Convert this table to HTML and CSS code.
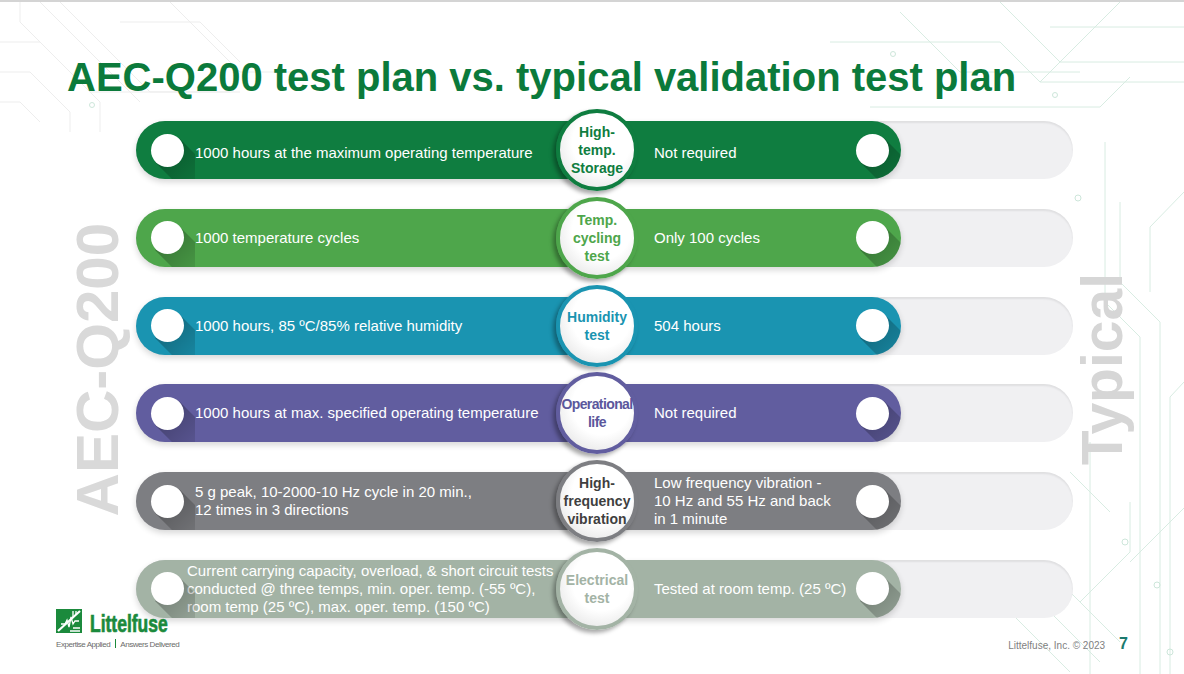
FILE: index.html
```html
<!DOCTYPE html>
<html lang="en">
<head>
<meta charset="utf-8">
<title>AEC-Q200 test plan vs. typical validation test plan</title>
<link rel="stylesheet" href="styles.css">
</head>
<body>
<div class="slide">
  <h1 class="title">AEC-Q200 test plan vs. typical validation test plan</h1>
  <div class="main">
    <div class="side-label side-left">AEC-Q200</div>
    <div class="rows">
      <div class="track row1">
        <div class="pill">
          <div class="dot-cell l"><span class="dot"></span></div>
          <div class="txt left low">1000 hours at the maximum operating temperature</div>
          <div class="badge"><span>High-<br>temp.<br>Storage</span></div>
          <div class="txt right low">Not required</div>
          <div class="dot-cell r"><span class="dot"></span></div>
        </div>
      </div>
      <div class="track row2">
        <div class="pill">
          <div class="dot-cell l"><span class="dot"></span></div>
          <div class="txt left">1000 temperature cycles</div>
          <div class="badge"><span>Temp.<br>cycling<br>test</span></div>
          <div class="txt right">Only 100 cycles</div>
          <div class="dot-cell r"><span class="dot"></span></div>
        </div>
      </div>
      <div class="track row3">
        <div class="pill">
          <div class="dot-cell l"><span class="dot"></span></div>
          <div class="txt left">1000 hours, 85 ºC/85% relative humidity</div>
          <div class="badge"><span>Humidity<br>test</span></div>
          <div class="txt right">504 hours</div>
          <div class="dot-cell r"><span class="dot"></span></div>
        </div>
      </div>
      <div class="track row4">
        <div class="pill">
          <div class="dot-cell l"><span class="dot"></span></div>
          <div class="txt left">1000 hours at max. specified operating temperature</div>
          <div class="badge"><span class="tight">Operational<br>life</span></div>
          <div class="txt right">Not required</div>
          <div class="dot-cell r"><span class="dot"></span></div>
        </div>
      </div>
      <div class="track row5">
        <div class="pill">
          <div class="dot-cell l"><span class="dot"></span></div>
          <div class="txt left">5 g peak, 10-2000-10 Hz cycle in 20 min.,<br>12 times in 3 directions</div>
          <div class="badge"><span>High-<br>frequency<br>vibration</span></div>
          <div class="txt right">Low frequency vibration -<br>10 Hz and 55 Hz and back<br>in 1 minute</div>
          <div class="dot-cell r"><span class="dot"></span></div>
        </div>
      </div>
      <div class="track row6">
        <div class="pill">
          <div class="dot-cell l"><span class="dot"></span></div>
          <div class="txt left wide">Current carrying capacity, overload, &amp; short circuit tests<br>conducted @ three temps, min. oper. temp. (-55 ºC),<br>room temp (25 ºC), max. oper. temp. (150 ºC)</div>
          <div class="badge"><span>Electrical<br>test</span></div>
          <div class="txt right">Tested at room temp. (25 ºC)</div>
          <div class="dot-cell r"><span class="dot"></span></div>
        </div>
      </div>
    </div>
    <div class="side-label side-right">Typical</div>
  </div>
  <footer class="footer">
    <div class="logo">
      <div class="logo-row">
        <svg class="logo-icon" viewBox="0 0 26 24" width="26" height="24" aria-hidden="true">
          <rect width="26" height="24" fill="#1b8a3c"/>
          <path d="M2 22 L24 2" stroke="#fff" stroke-width="2.2" fill="none"/>
          <polyline points="5,15 9,15 11,11 13,18 15,8 17,15 19,12 23,12" fill="none" stroke="#fff" stroke-width="1.3"/>
          <path d="M17 2 V8 M20 2 V6 M14 22 H24 M17 19 H24" stroke="#fff" stroke-width="1.3" fill="none"/>
        </svg>
        <span class="logo-word">Littelfuse</span>
      </div>
      <div class="tagline">Expertise Applied <span class="bar"></span> Answers Delivered</div>
    </div>
    <div class="foot-right">
      <span class="copy">Littelfuse, Inc. © 2023</span>
      <span class="page-no">7</span>
    </div>
  </footer>
</div>
</body>
</html>
```
FILE: styles.css
```css
html, body {
  margin: 0;
  padding: 0;
  background: #fff;
}

.slide {
  width: 1184px;
  height: 674px;
  box-sizing: border-box;
  overflow: hidden;
  border-top: 2px solid #d4d4d4;
  font-family: "Liberation Sans", Arial, sans-serif;
  background-color: #fff;
  background-repeat: no-repeat;
  background-image: url("data:image/svg+xml;utf8,<svg xmlns='http://www.w3.org/2000/svg' width='1184' height='674' viewBox='0 0 1184 674'><g fill='none' stroke-width='1'><g stroke='%23ededed'><path d='M0 40 H40 L90 90 H230'/><path d='M20 0 V20 L100 100 V130'/><path d='M60 0 L150 90 H240'/><path d='M0 70 H30 L70 110 V130'/><path d='M120 20 H200 L240 60'/><path d='M40 0 L140 100'/><path d='M0 100 H20 L40 120'/><path d='M170 0 L240 70 H300'/></g><g stroke='%23d8ece2'><path d='M830 40 H1000 L1040 80 H1184'/><path d='M900 10 L960 70 H1080'/><path d='M1000 0 L1060 60 H1184'/><path d='M870 105 H1100 L1130 75'/><path d='M1050 25 H1184'/><path d='M1120 0 L1040 80'/><path d='M1105 140 V300 L1140 335 V674'/><path d='M1120 200 V280 L1160 320 V674'/><path d='M1184 190 L1150 225 V290'/><path d='M1090 440 V674'/><path d='M1184 380 L1170 395 V674'/><path d='M960 560 L1070 670'/><path d='M1000 560 L1100 660'/><path d='M1040 560 L1120 640'/><path d='M1070 470 L1110 510'/><path d='M1130 560 L1184 506'/><path d='M1080 600 L1130 550 V500'/></g><g stroke='%23cde6da'><circle cx='1078' cy='196' r='3'/><circle cx='1125' cy='540' r='3'/><circle cx='1157' cy='583' r='3'/><circle cx='1170' cy='650' r='3'/><circle cx='92' cy='103' r='2.5'/><circle cx='893' cy='52' r='2.5'/><circle cx='1055' cy='93' r='2.5'/></g></g></svg>");
}

.title {
  margin: 0;
  padding: 52px 0 0 67px;
  font-size: 40px;
  line-height: 46px;
  font-weight: bold;
  color: #0b7a3b;
  white-space: nowrap;
}

.main {
  display: grid;
  grid-template-columns: 136px 937px 1fr;
  margin-top: 21px;
}

.side-label {
  align-self: center;
  writing-mode: vertical-rl;
  transform: rotate(180deg);
  font-weight: bold;
  white-space: nowrap;
}

.side-left {
  justify-self: end;
  margin-right: 8px;
  font-size: 60px;
  line-height: 60px;
  color: #d9d9d9;
}

.side-right {
  justify-self: start;
  font-size: 57px;
  line-height: 58px;
  color: #d6d6d6;
}

.rows {
  display: flex;
  flex-direction: column;
  gap: 29.8px;
}

.row1 { --c: #0f7d40; --t: #0f7d40; }
.row2 { --c: #4ea64b; --t: #4ea64b; }
.row3 { --c: #1a94b1; --t: #1a94b1; }
.row4 { --c: #615d9f; --t: #5b579c; }
.row5 { --c: #7d7e82; --t: #3f3f3f; }
.row6 { --c: #a3b3a5; --t: #a3b3a5; }

.track {
  display: flex;
  height: 58px;
  border-radius: 29px;
  background: #f0f0f2;
  box-shadow: inset 0 2px 2px rgba(0, 0, 0, 0.07);
}

.pill {
  width: 765px;
  height: 58px;
  border-radius: 29px;
  background: var(--c);
  display: grid;
  grid-template-columns: 59px 361px 98px 186px 61px;
  grid-template-rows: 58px;
  align-items: center;
  box-shadow: 0 3px 6px rgba(0, 0, 0, 0.16);
  color: #fff;
  font-size: 15px;
  line-height: 18px;
}

.dot-cell {
  position: relative;
  align-self: stretch;
  height: 58px;
  overflow: hidden;
}

.dot-cell.l { border-radius: 29px 0 0 29px; }
.dot-cell.r { border-radius: 0 29px 29px 0; }

.dot-cell::before {
  content: "";
  position: absolute;
  top: 29px;
  left: 31px;
  width: 34px;
  height: 62px;
  margin-left: -17px;
  transform-origin: 50% 0;
  transform: rotate(-45deg);
  background: linear-gradient(rgba(0, 0, 0, 0.28), rgba(0, 0, 0, 0));
}

.dot-cell.r::before { left: 32px; }

.dot {
  position: relative;
  display: block;
  width: 33px;
  height: 33px;
  border-radius: 50%;
  background: #fff;
  margin: 12.5px 0 0 14.5px;
}

.dot-cell.r .dot { margin-left: 15.5px; }

.txt {
  white-space: nowrap;
}

.txt.low {
  padding-top: 5px;
}

.txt.wide {
  margin-left: -8px;
}

.badge {
  position: relative;
  z-index: 1;
  justify-self: start;
  box-sizing: border-box;
  width: 82px;
  height: 82px;
  margin: -12px 0;
  border-radius: 50%;
  border: 4px solid var(--c);
  background: radial-gradient(circle at 56% 40%, #ffffff 0, #ffffff 48%, #ededed 74%, #d2d2d2 100%);
  box-shadow: -3px 3px 4px rgba(0, 0, 0, 0.35);
  display: flex;
  align-items: center;
  justify-content: center;
  text-align: center;
  font-weight: bold;
  font-size: 14px;
  line-height: 18px;
  color: var(--t);
}

.badge .tight {
  letter-spacing: -0.6px;
  white-space: nowrap;
}

.footer {
  display: flex;
  justify-content: space-between;
  align-items: flex-start;
  margin-top: -9px;
  padding: 0 56px;
}

.logo-row {
  display: flex;
  align-items: flex-start;
  gap: 8px;
}

.logo-icon {
  display: block;
}

.logo-word {
  display: inline-block;
  margin-top: 3px;
  font-size: 23px;
  line-height: 24px;
  font-weight: bold;
  color: #1b8a3c;
  -webkit-text-stroke: 0.7px #1b8a3c;
  transform: scaleX(0.76);
  transform-origin: 0 50%;
}

.tagline {
  margin-top: 3px;
  font-size: 8px;
  line-height: 10px;
  color: #6b6b6b;
  letter-spacing: -0.45px;
  white-space: nowrap;
}

.tagline .bar {
  display: inline-block;
  width: 1px;
  height: 9px;
  margin: 0 3px;
  background: #1b8a3c;
  vertical-align: -1px;
}

.foot-right {
  display: flex;
  align-items: baseline;
  gap: 14px;
  margin-top: 26px;
  line-height: 18px;
}

.copy {
  font-size: 10px;
  color: #7f7f7f;
}

.page-no {
  font-size: 16px;
  font-weight: bold;
  color: #1b7a6e;
}
```
